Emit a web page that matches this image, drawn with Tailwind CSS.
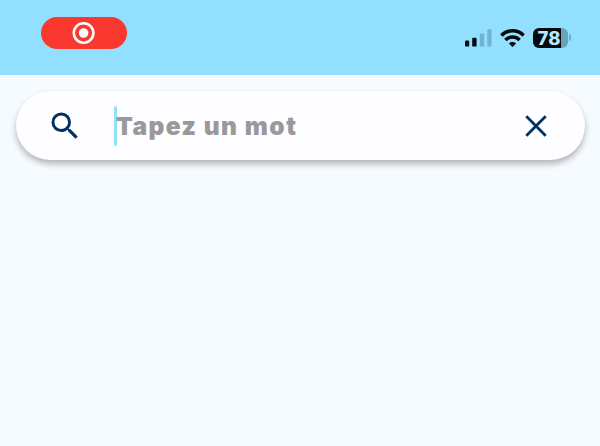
<!DOCTYPE html>
<html lang="fr">
<head>
<meta charset="utf-8">
<title>Recherche</title>
<script src="https://cdn.jsdelivr.net/npm/@tailwindcss/browser@4"></script>
</head>
<body class="h-[446px] w-[600px] overflow-hidden bg-[#f5fbff] font-['Inter','Liberation_Sans',sans-serif]">
<header class="flex h-[75px] items-start justify-between bg-[#92dfff] pr-[29px] pl-[41px]">
  <div class="mt-[16.5px] flex h-[32.5px] w-[86px] items-center justify-center rounded-full bg-[#fb382f]">
    <svg class="size-6" viewBox="0 0 24 24"><circle cx="11.6" cy="12" r="9.8" fill="none" stroke="#fff" stroke-width="2.6"/><circle cx="11.6" cy="12" r="4.8" fill="#fff"/></svg>
  </div>
  <div class="mt-7 flex h-5 items-start">
    <svg class="mr-[8px] h-5 w-[27px]" viewBox="0 0 27 20"><g fill="#06090b"><rect y="12.6" width="4.2" height="6" rx="1.2"/><rect x="7.2" y="9.8" width="4.4" height="8.8" rx="1.2"/></g><g fill="#72b4d0"><rect x="14.8" y="5.6" width="4.4" height="13" rx="1.2"/><rect x="22.2" y="1.2" width="4.4" height="17.4" rx="1.2"/></g></svg>
    <svg class="mr-[8px] h-5 w-[25px]" viewBox="0 0 25 20" fill="none" stroke="#06090b" stroke-width="3.5"><path d="M1.4 7.4a15.7 15.7 0 0 1 22.2 0"/><path d="M5.4 12a10.1 10.1 0 0 1 14.2 0"/><path d="M12.5 19l-3.6-3.6a5.2 5.2 0 0 1 7.2 0z" fill="#06090b" stroke="none"/></svg>
    <div class="flex items-center gap-[1px]">
      <div class="flex h-[19.5px] w-[35px] items-center rounded-[6px] bg-linear-to-r from-[#06090b] from-80% to-[#6aa2ba] to-80% pl-[5px] text-[18.5px] leading-none font-extrabold tracking-[0.1px] text-[#b4e9ff]">78</div>
      <div class="h-[7px] w-[2.5px] rounded-r-full bg-[#72aec8]"></div>
    </div>
  </div>
</header>
<main class="px-[15.5px] pt-4">
  <div class="flex h-[69px] items-center rounded-full bg-[#fefdff] pr-[31px] pl-[31px] shadow-[0_4px_6px_rgba(0,0,0,0.28)]">
    <svg class="size-[36px]" viewBox="0 0 24 24" fill="#003264"><path d="M15.5 14h-.79l-.28-.27A6.471 6.471 0 0 0 16 9.5 6.5 6.5 0 1 0 9.5 16c1.61 0 3.09-.59 4.23-1.57l.27.28v.79l5 4.99L20.49 19l-4.99-5zm-6 0C7.01 14 5 11.99 5 9.5S7.01 5 9.5 5 14 7.01 14 9.5 11.99 14 9.5 14z"/></svg>
    <div class="ml-[31.5px] h-10 w-[3px] rounded-full bg-[#92dfff]"></div>
    <div class="-ml-[1px] flex-1 pt-[2px] text-[24.5px] leading-none font-black tracking-[1.45px] whitespace-nowrap text-[#99989b]">Tapez un mot</div>
    <svg class="size-[36px]" viewBox="0 0 36 36" fill="none" stroke="#003264" stroke-width="2.8"><path d="M8.3 8.3l19.4 19.4M27.7 8.3l-19.4 19.4"/></svg>
  </div>
</main>
</body>
</html>
